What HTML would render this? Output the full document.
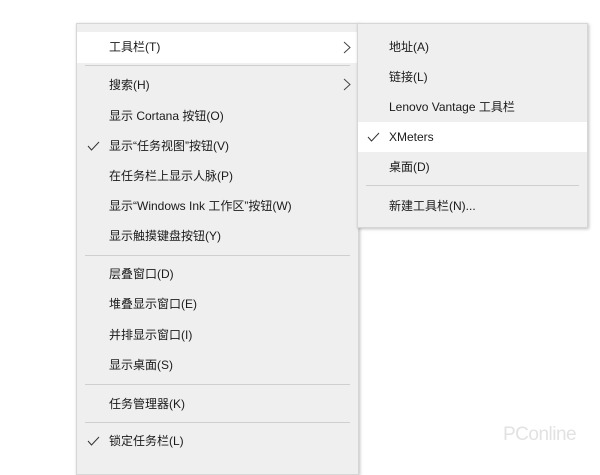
<!DOCTYPE html>
<html><head><meta charset="utf-8"><style>
body{margin:0;width:600px;height:460px;background:#fff;position:relative;overflow:hidden;font-family:"Liberation Sans","Noto Sans CJK SC",sans-serif;font-size:12px;color:#1a1a1a}
.m{position:absolute;background:#efefef;border:1px solid #d6d6d6;box-shadow:1px 1px 3px rgba(0,0,0,.25)}
.i{position:absolute;left:0;right:0;height:30px;line-height:30px}
.i span{position:absolute}
.hl{background:#fff}
.sep{position:absolute;height:1px;background:#cfcfcf}
svg{position:absolute}
</style></head><body>
<div class="m" style="left:76px;top:23px;width:281px;height:450px">
 <div class="i hl" style="top:8px;height:31px;line-height:31px"><span style="left:32px">工具栏(T)</span><svg style="left:266px;top:9px" width="8" height="13"><path d="M1 1 L7 6.5 L1 12" fill="none" stroke="#444" stroke-width="1"/></svg></div>
 <div class="sep" style="left:8px;right:8px;top:41px"></div>
 <div class="i" style="top:46px"><span style="left:32px">搜索(H)</span><svg style="left:266px;top:8px" width="8" height="13"><path d="M1 1 L7 6.5 L1 12" fill="none" stroke="#444" stroke-width="1"/></svg></div>
 <div class="i" style="top:77px"><span style="left:32px">显示 Cortana 按钮(O)</span></div>
 <div class="i" style="top:107px"><svg style="left:10px;top:10px" width="13" height="10"><path d="M1 5 L4.5 9 L12 1" fill="none" stroke="#333" stroke-width="1"/></svg><span style="left:32px">显示“任务视图”按钮(V)</span></div>
 <div class="i" style="top:137px"><span style="left:32px">在任务栏上显示人脉(P)</span></div>
 <div class="i" style="top:167px"><span style="left:32px">显示“Windows Ink 工作区”按钮(W)</span></div>
 <div class="i" style="top:197px"><span style="left:32px">显示触摸键盘按钮(Y)</span></div>
 <div class="sep" style="left:8px;right:8px;top:231px"></div>
 <div class="i" style="top:235px"><span style="left:32px">层叠窗口(D)</span></div>
 <div class="i" style="top:265px"><span style="left:32px">堆叠显示窗口(E)</span></div>
 <div class="i" style="top:296px"><span style="left:32px">并排显示窗口(I)</span></div>
 <div class="i" style="top:326px"><span style="left:32px">显示桌面(S)</span></div>
 <div class="sep" style="left:8px;right:8px;top:360px"></div>
 <div class="i" style="top:365px"><span style="left:32px">任务管理器(K)</span></div>
 <div class="sep" style="left:8px;right:8px;top:398px"></div>
 <div class="i" style="top:402px"><svg style="left:10px;top:10px" width="13" height="10"><path d="M1 5 L4.5 9 L12 1" fill="none" stroke="#333" stroke-width="1"/></svg><span style="left:32px">锁定任务栏(L)</span></div>
</div>
<div class="m" style="left:357px;top:23px;width:229px;height:203px">
 <div class="i" style="top:8px"><span style="left:31px">地址(A)</span></div>
 <div class="i" style="top:38px"><span style="left:31px">链接(L)</span></div>
 <div class="i" style="top:68px"><span style="left:31px">Lenovo Vantage 工具栏</span></div>
 <div class="i hl" style="top:98px"><svg style="left:9px;top:10px" width="13" height="10"><path d="M1 5 L4.5 9 L12 1" fill="none" stroke="#333" stroke-width="1"/></svg><span style="left:31px">XMeters</span></div>
 <div class="i" style="top:128px"><span style="left:31px">桌面(D)</span></div>
 <div class="sep" style="left:8px;right:8px;top:161px"></div>
 <div class="i" style="top:167px"><span style="left:31px">新建工具栏(N)...</span></div>
</div>
<div style="position:absolute;left:503px;top:424px;font-size:19px;color:#e2e2e2;letter-spacing:-.5px">PConline</div>
</body></html>
